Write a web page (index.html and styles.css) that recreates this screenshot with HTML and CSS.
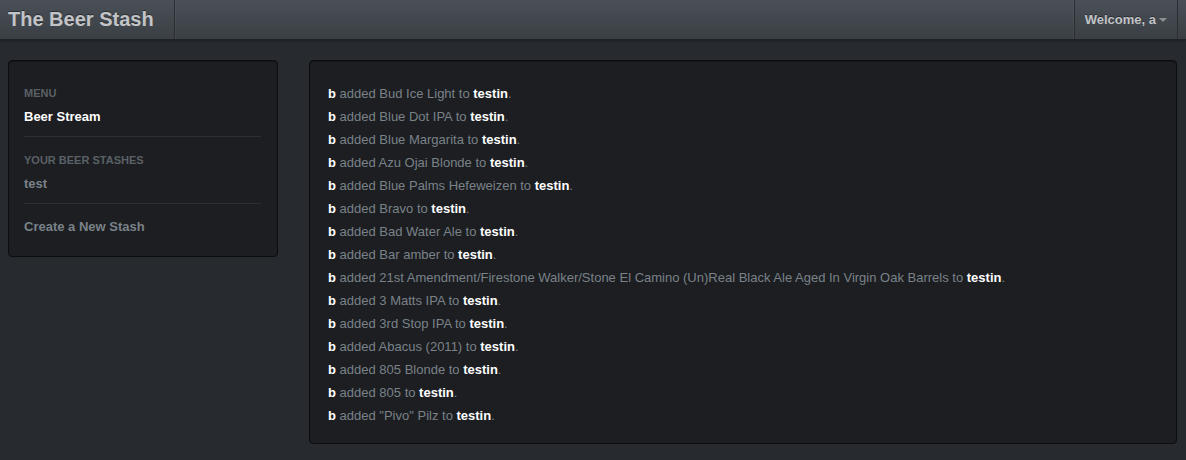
FILE: index.html
```html
<!DOCTYPE html>
<html>
<head>
<meta charset="utf-8">
<link rel="stylesheet" href="styles.css">
</head>
<body>
<div class="navbar">
  <a class="brand">The Beer Stash</a>
  <div class="spacer"></div>
  <div class="user-menu">Welcome, a <span class="caret"></span></div>
</div>
<div class="layout">
  <div class="well sidebar">
    <div class="nav-header">Menu</div>
    <div class="nav-item active">Beer Stream</div>
    <div class="divider"></div>
    <div class="nav-header">Your Beer Stashes</div>
    <div class="nav-item">test</div>
    <div class="divider"></div>
    <div class="nav-item">Create a New Stash</div>
  </div>
  <div class="well stream">
    <ul class="events">
      <li><b>b</b> added Bud Ice Light to <b>testin</b>.</li>
      <li><b>b</b> added Blue Dot IPA to <b>testin</b>.</li>
      <li><b>b</b> added Blue Margarita to <b>testin</b>.</li>
      <li><b>b</b> added Azu Ojai Blonde to <b>testin</b>.</li>
      <li><b>b</b> added Blue Palms Hefeweizen to <b>testin</b>.</li>
      <li><b>b</b> added Bravo to <b>testin</b>.</li>
      <li><b>b</b> added Bad Water Ale to <b>testin</b>.</li>
      <li><b>b</b> added Bar amber to <b>testin</b>.</li>
      <li><b>b</b> added 21st Amendment/Firestone Walker/Stone El Camino (Un)Real Black Ale Aged In Virgin Oak Barrels to <b>testin</b>.</li>
      <li><b>b</b> added 3 Matts IPA to <b>testin</b>.</li>
      <li><b>b</b> added 3rd Stop IPA to <b>testin</b>.</li>
      <li><b>b</b> added Abacus (2011) to <b>testin</b>.</li>
      <li><b>b</b> added 805 Blonde to <b>testin</b>.</li>
      <li><b>b</b> added 805 to <b>testin</b>.</li>
      <li><b>b</b> added "Pivo" Pilz to <b>testin</b>.</li>
    </ul>
  </div>
</div>
</body>
</html>
```
FILE: styles.css
```css
* { box-sizing: border-box; }
body {
  margin: 0;
  background: #272b30;
  font-family: "Liberation Sans", Arial, sans-serif;
  font-size: 13px;
  color: #7a8288;
}
.navbar {
  height: 40px;
  display: flex;
  align-items: stretch;
  background: linear-gradient(#4a5057, #3a3f44);
  border-bottom: 1px solid #1f2226;
  box-shadow: 0 1px 2px rgba(0,0,0,0.3);
}
.brand {
  display: flex;
  align-items: center;
  padding: 0 20px 0 8px;
  font-size: 20px;
  font-weight: bold;
  color: #c2c4c7;
  text-shadow: 0 -1px 0 rgba(0,0,0,0.4);
  border-right: 1px solid #2a2e32;
  box-shadow: 1px 0 0 rgba(255,255,255,0.04);
}
.spacer { flex: 1; }
.user-menu {
  display: flex;
  align-items: center;
  gap: 3px;
  padding: 0 10px 0 10px;
  margin-right: 8px;
  font-size: 13px;
  font-weight: bold;
  color: #c2c4c7;
  text-shadow: 0 -1px 0 rgba(0,0,0,0.4);
  border-left: 1px solid #2a2e32;
  border-right: 1px solid #2a2e32;
  box-shadow: -1px 0 0 rgba(255,255,255,0.04);
}
.caret {
  width: 0; height: 0;
  border-left: 4px solid transparent;
  border-right: 4px solid transparent;
  border-top: 4px solid #8a8f94;
  margin-top: 1px;
}
.layout {
  display: grid;
  grid-template-columns: 270px 1fr;
  column-gap: 31px;
  align-items: start;
  padding: 20px 9px 0 8px;
}
.well {
  background: #1c1e22;
  border: 1px solid #0c0d0e;
  border-radius: 4px;
  box-shadow: inset 0 1px 1px rgba(0,0,0,0.3);
}
.sidebar {
  padding: 20px 15px 18px 15px;
}
.nav-header {
  font-size: 11px;
  font-weight: bold;
  text-transform: uppercase;
  color: #5b6066;
  line-height: 24px;
}
.nav-item {
  font-weight: bold;
  color: #7a8288;
  line-height: 23px;
}
.nav-item.active { color: #ffffff; }
.divider {
  height: 1px;
  background: #2c3035;
  margin: 8px 1px 11px 0;
}
.stream {
  padding: 21px 19px 16px 18px;
}
.events {
  list-style: none;
  margin: 0;
  padding: 0;
}
.events li {
  line-height: 23px;
  white-space: nowrap;
}
.events b { color: #ffffff; }
```
